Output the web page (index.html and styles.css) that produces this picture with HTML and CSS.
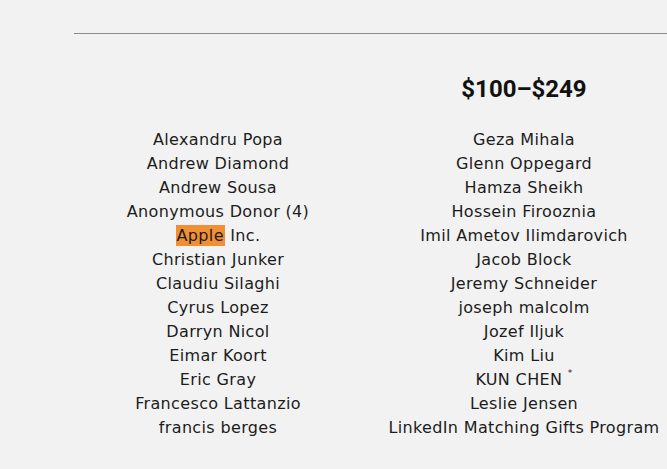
FILE: index.html
```html
<!DOCTYPE html>
<html lang="en">
<head>
<meta charset="utf-8">
<title>Donors</title>
<link rel="stylesheet" href="styles.css">
</head>
<body>
<hr class="divider">
<section class="tiers">
  <h2 class="tier-heading">$100–$249</h2>
  <ul class="names">
    <li>Alexandru Popa</li>
    <li>Andrew Diamond</li>
    <li>Andrew Sousa</li>
    <li>Anonymous Donor (4)</li>
    <li><mark class="hl">Apple</mark> Inc.</li>
    <li>Christian Junker</li>
    <li>Claudiu Silaghi</li>
    <li>Cyrus Lopez</li>
    <li>Darryn Nicol</li>
    <li>Eimar Koort</li>
    <li>Eric Gray</li>
    <li>Francesco Lattanzio</li>
    <li>francis berges</li>
  </ul>
  <ul class="names">
    <li>Geza Mihala</li>
    <li>Glenn Oppegard</li>
    <li>Hamza Sheikh</li>
    <li>Hossein Firooznia</li>
    <li>Imil Ametov Ilimdarovich</li>
    <li>Jacob Block</li>
    <li>Jeremy Schneider</li>
    <li>joseph malcolm</li>
    <li>Jozef Iljuk</li>
    <li>Kim Liu</li>
    <li>KUN CHEN <sup class="star">*</sup></li>
    <li>Leslie Jensen</li>
    <li>LinkedIn Matching Gifts Program</li>
  </ul>
</section>
</body>
</html>
```
FILE: styles.css
```css
html, body {
  margin: 0;
  padding: 0;
  background: #f2f2f2;
}
body {
  padding-top: 33px;
  font-family: "DejaVu Sans", "Open Sans", sans-serif;
  color: #1c1c1c;
  overflow: hidden;
}
.divider {
  margin: 0 0 0 74px;
  border: 0;
  border-top: 1px solid #8c8c8c;
  height: 0;
}
.tiers {
  display: grid;
  grid-template-columns: 306px 306px;
  margin-left: 65px;
}
.tier-heading {
  grid-column: 2;
  grid-row: 1;
  margin: 40px 0 0;
  text-align: center;
  font-family: Roboto, "Liberation Sans", sans-serif;
  font-weight: 700;
  font-size: 24px;
  line-height: 30px;
  color: #111;
}
.names {
  grid-row: 2;
  list-style: none;
  margin: 24px 0 0;
  padding: 0;
  text-align: center;
  font-size: 16px;
  line-height: 24px;
  letter-spacing: 0.35px;
  white-space: nowrap;
}
.hl {
  background: #f18f35;
  color: #1c1c1c;
  padding: 1px 1px;
}
.star {
  font-size: 9px;
  line-height: 0;
  vertical-align: 9px;
}
```
